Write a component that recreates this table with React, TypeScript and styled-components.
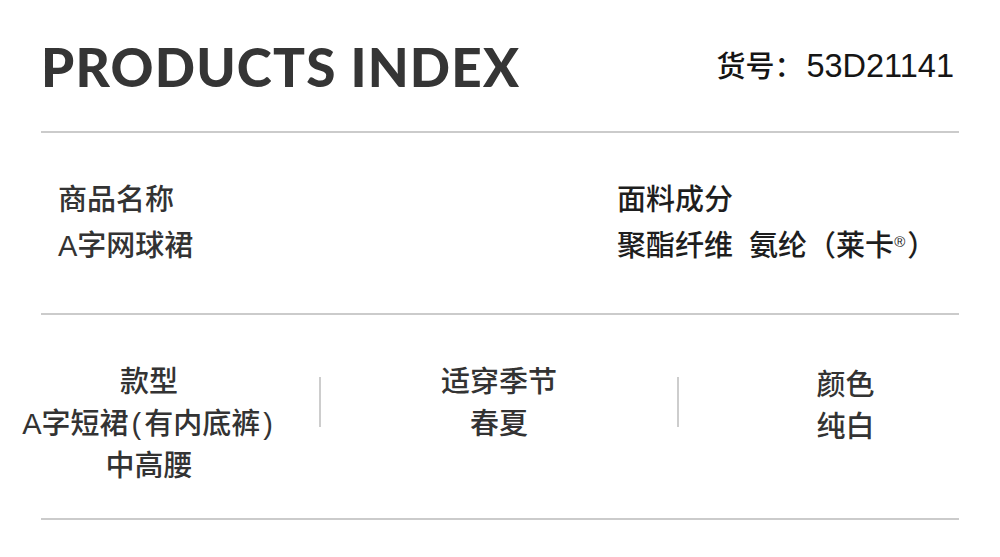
import React from "react";
import styled, { createGlobalStyle } from "styled-components";

const GlobalStyle = createGlobalStyle`
  html, body {
    margin: 0;
    padding: 0;
    background: #ffffff;
    overflow: hidden;
  }
  body {
    font-family: "Liberation Sans", "Noto Sans CJK SC", sans-serif;
  }
`;

const Page = styled.div`
  width: 1000px;
  height: 557px;
  background: #fff;
  display: flex;
  flex-direction: column;
`;

const Header = styled.header`
  height: 131px;
  padding: 0 46px 0 41px;
  display: flex;
  align-items: center;
  justify-content: space-between;
  box-sizing: border-box;
`;

const Title = styled.h1`
  margin: 0;
  font-family: "Lato", "Liberation Sans", sans-serif;
  font-weight: 900;
  font-size: 53px;
  letter-spacing: 1.2px;
  color: #353535;
  line-height: 1;
  padding-top: 2px;
`;

const SerialNo = styled.div`
  font-family: "Liberation Sans", "Noto Sans CJK SC", sans-serif;
  font-weight: 500;
  font-size: 29px;
  color: #151515;
  line-height: 1;
  padding-top: 2px;
  display: flex;
  align-items: baseline;
`;

const SerialCode = styled.span`
  font-size: 32.5px;
  margin-left: 3px;
`;

const Divider = styled.hr`
  margin: 0 41px;
  border: none;
  height: 2px;
  background: #cbcbcb;
  flex-shrink: 0;
`;

const InfoSection = styled.section`
  display: grid;
  grid-template-columns: 559px 1fr;
  padding: 44px 0 44px 58px;
  height: 180px;
  box-sizing: border-box;
`;

const InfoBlock = styled.div<{ $dark?: boolean }>`
  font-family: "Liberation Sans", "Noto Sans CJK SC", sans-serif;
  font-weight: 500;
  font-size: 29px;
  line-height: 46px;
  color: ${(p) => (p.$dark ? "#1e1e1e" : "#333333")};
  white-space: pre;
`;

const Line = styled.div``;

const Reg = styled.sup`
  font-size: 15px;
  vertical-align: 0;
  position: relative;
  top: -9px;
  margin-right: 2px;
`;

const SpecRow = styled.section`
  display: flex;
  align-items: flex-start;
  height: 203px;
  box-sizing: border-box;
  padding-top: 46px;
`;

const SpecCell = styled.div<{ $width?: number; $offset?: number; $shift?: number }>`
  width: ${(p) => (p.$width ? `${p.$width}px` : "auto")};
  flex: ${(p) => (p.$width ? "none" : "1")};
  padding-left: ${(p) => p.$offset ?? 0}px;
  margin-top: ${(p) => p.$shift ?? 0}px;
  text-align: center;
  font-family: "Liberation Sans", "Noto Sans CJK SC", sans-serif;
  font-weight: 500;
  font-size: 29px;
  line-height: 42px;
  color: #333333;
`;

const Separator = styled.div<{ $gap: number }>`
  width: 2px;
  height: 50px;
  margin-top: 16px;
  margin-left: ${(p) => p.$gap}px;
  background: #cdcdcd;
  flex-shrink: 0;
`;

const Paren = styled.span`
  margin: 0 3px;
`;

export default function App() {
  return (
    <>
      <GlobalStyle />
      <Page>
        <Header>
          <Title>PRODUCTS INDEX</Title>
          <SerialNo>
            货号：<SerialCode>53D21141</SerialCode>
          </SerialNo>
        </Header>
        <Divider />
        <InfoSection>
          <InfoBlock>
            <Line>商品名称</Line>
            <Line>A字网球裙</Line>
          </InfoBlock>
          <InfoBlock $dark>
            <Line>面料成分</Line>
            <Line>
              聚酯纤维  氨纶（莱卡<Reg>®</Reg>）
            </Line>
          </InfoBlock>
        </InfoSection>
        <Divider />
        <SpecRow>
          <SpecCell $width={298}>
            <Line>款型</Line>
            <Line>
              A字短裙<Paren>(</Paren>有内底裤<Paren>)</Paren>
            </Line>
            <Line>中高腰</Line>
          </SpecCell>
          <Separator $gap={21} />
          <SpecCell $width={356}>
            <Line>适穿季节</Line>
            <Line>春夏</Line>
          </SpecCell>
          <Separator $gap={0} />
          <SpecCell $offset={12} $shift={3}>
            <Line>颜色</Line>
            <Line>纯白</Line>
          </SpecCell>
        </SpecRow>
        <Divider />
      </Page>
    </>
  );
}
